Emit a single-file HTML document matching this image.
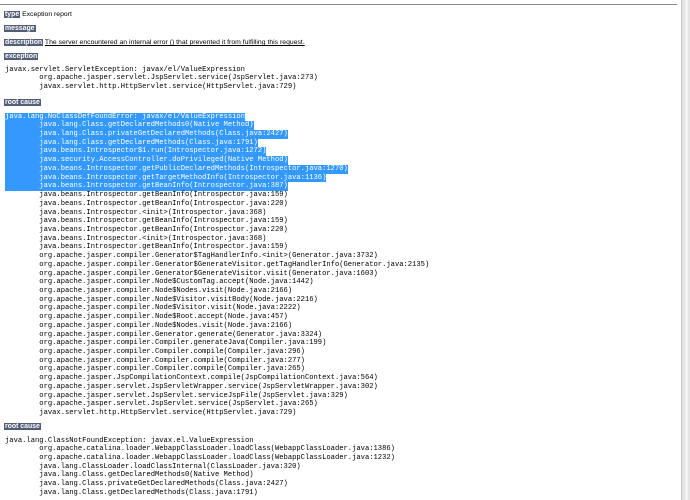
<!DOCTYPE html>
<html><head><meta charset="utf-8"><style>
html,body{margin:0;padding:0;width:690px;height:500px;overflow:hidden;background:#fff;position:relative}
.hr{position:absolute;left:0;top:4px;width:677px;height:1px;background:#8a8a8a}
.sb{position:absolute;left:681px;top:0;width:9px;height:500px;background:#e4e4e4;border-left:1px solid #c8c8c8;box-sizing:border-box}
.sb:after{content:"";position:absolute;left:3px;top:0;width:3px;height:500px;background:#f2f2f2}
.l{position:absolute;font-family:"Liberation Sans",sans-serif;font-size:6.85px;line-height:10px;white-space:nowrap;color:#000}
.b{background:#525D76;color:#fff;font-weight:bold;font-size:6.9px;padding:0 1px}
pre{position:absolute;left:5px;margin:0;font-family:"Liberation Mono",monospace;font-size:7.15px;line-height:8.72px;color:#000;tab-size:8}
.h{background:#3399ff;color:#fff;display:inline-block;height:8.72px}
</style></head><body>
<div class="hr"></div>
<div class="sb"></div>
<div class="l" style="left:4px;top:10px"><span class="b">type</span> Exception report</div>
<div class="l" style="left:4px;top:24px"><span class="b">message</span></div>
<div class="l" style="left:4px;top:38px"><span class="b">description</span> <u>The server encountered an internal error () that prevented it from fulfilling this request.</u></div>
<div class="l" style="left:4px;top:52px"><span class="b">exception</span></div>
<pre style="top:65.6px">javax.servlet.ServletException: javax/el/ValueExpression
	org.apache.jasper.servlet.JspServlet.service(JspServlet.java:273)
	javax.servlet.http.HttpServlet.service(HttpServlet.java:729)</pre>
<div class="l" style="left:4px;top:98px"><span class="b">root cause</span></div>
<pre style="top:112.6px"><span class="h">java.lang.NoClassDefFoundError: javax/el/ValueExpression</span>
<span class="h">	java.lang.Class.getDeclaredMethods0(Native Method)</span>
<span class="h">	java.lang.Class.privateGetDeclaredMethods(Class.java:2427)</span>
<span class="h">	java.lang.Class.getDeclaredMethods(Class.java:1791)</span>
<span class="h">	java.beans.Introspector$1.run(Introspector.java:1272)</span>
<span class="h">	java.security.AccessController.doPrivileged(Native Method)</span>
<span class="h">	java.beans.Introspector.getPublicDeclaredMethods(Introspector.java:1270)</span>
<span class="h">	java.beans.Introspector.getTargetMethodInfo(Introspector.java:1136)</span>
<span class="h">	java.beans.Introspector.getBeanInfo(Introspector.java:387)</span>
	java.beans.Introspector.getBeanInfo(Introspector.java:159)
	java.beans.Introspector.getBeanInfo(Introspector.java:220)
	java.beans.Introspector.&lt;init&gt;(Introspector.java:368)
	java.beans.Introspector.getBeanInfo(Introspector.java:159)
	java.beans.Introspector.getBeanInfo(Introspector.java:220)
	java.beans.Introspector.&lt;init&gt;(Introspector.java:368)
	java.beans.Introspector.getBeanInfo(Introspector.java:159)
	org.apache.jasper.compiler.Generator$TagHandlerInfo.&lt;init&gt;(Generator.java:3732)
	org.apache.jasper.compiler.Generator$GenerateVisitor.getTagHandlerInfo(Generator.java:2135)
	org.apache.jasper.compiler.Generator$GenerateVisitor.visit(Generator.java:1603)
	org.apache.jasper.compiler.Node$CustomTag.accept(Node.java:1442)
	org.apache.jasper.compiler.Node$Nodes.visit(Node.java:2166)
	org.apache.jasper.compiler.Node$Visitor.visitBody(Node.java:2216)
	org.apache.jasper.compiler.Node$Visitor.visit(Node.java:2222)
	org.apache.jasper.compiler.Node$Root.accept(Node.java:457)
	org.apache.jasper.compiler.Node$Nodes.visit(Node.java:2166)
	org.apache.jasper.compiler.Generator.generate(Generator.java:3324)
	org.apache.jasper.compiler.Compiler.generateJava(Compiler.java:199)
	org.apache.jasper.compiler.Compiler.compile(Compiler.java:296)
	org.apache.jasper.compiler.Compiler.compile(Compiler.java:277)
	org.apache.jasper.compiler.Compiler.compile(Compiler.java:265)
	org.apache.jasper.JspCompilationContext.compile(JspCompilationContext.java:564)
	org.apache.jasper.servlet.JspServletWrapper.service(JspServletWrapper.java:302)
	org.apache.jasper.servlet.JspServlet.serviceJspFile(JspServlet.java:329)
	org.apache.jasper.servlet.JspServlet.service(JspServlet.java:265)
	javax.servlet.http.HttpServlet.service(HttpServlet.java:729)</pre>
<div class="l" style="left:4px;top:422px"><span class="b">root cause</span></div>
<pre style="top:436.6px">java.lang.ClassNotFoundException: javax.el.ValueExpression
	org.apache.catalina.loader.WebappClassLoader.loadClass(WebappClassLoader.java:1386)
	org.apache.catalina.loader.WebappClassLoader.loadClass(WebappClassLoader.java:1232)
	java.lang.ClassLoader.loadClassInternal(ClassLoader.java:320)
	java.lang.Class.getDeclaredMethods0(Native Method)
	java.lang.Class.privateGetDeclaredMethods(Class.java:2427)
	java.lang.Class.getDeclaredMethods(Class.java:1791)</pre>
</body></html>
